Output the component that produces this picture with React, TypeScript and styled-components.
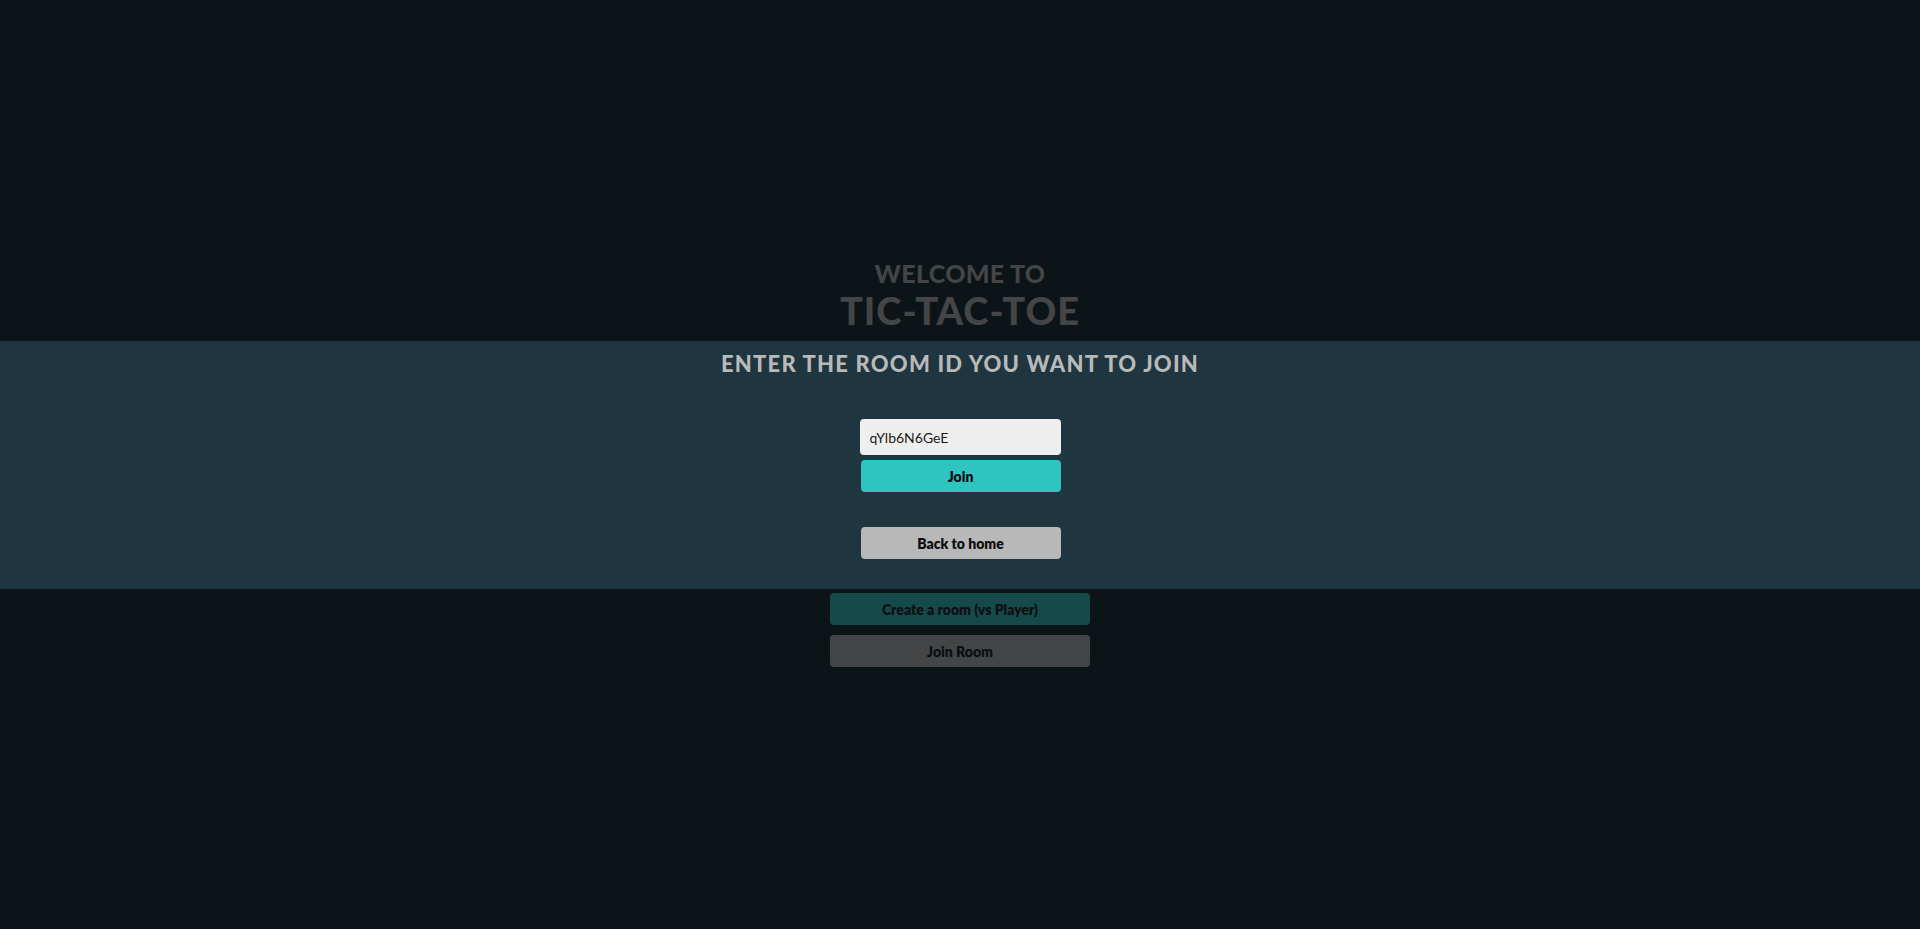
import React from "react";
import styled, { createGlobalStyle } from "styled-components";

const Global = createGlobalStyle`
  html, body { margin: 0; padding: 0; background: #0d1418; }
  body { font-family: "Lato", "Noto Sans", sans-serif; }
  * { box-sizing: border-box; }
`;

const Page = styled.main`
  min-height: 100vh;
  display: flex;
  flex-direction: column;
  align-items: center;
  justify-content: center;
  background: #0d1418;
`;

const Title = styled.h1`
  margin: 0;
  display: flex;
  flex-direction: column;
  align-items: center;
  color: #434546;
  font-weight: 900;
  text-transform: uppercase;
`;

const TitleSmall = styled.span`
  font-size: 25px;
  line-height: 22px;
  letter-spacing: 0.3px;
`;

const TitleBig = styled.span`
  font-size: 38px;
  line-height: 53px;
  letter-spacing: 1px;
`;

const Menu = styled.div`
  margin-top: 256px;
  width: 260px;
  display: flex;
  flex-direction: column;
  gap: 10px;
`;

const MenuButton = styled.button<{ $bg: string }>`
  height: 32px;
  width: 100%;
  border: none;
  border-radius: 4px;
  background: ${(p) => p.$bg};
  color: #0b0f11;
  font-family: inherit;
  font-weight: 800;
  font-size: 14px;
`;

const Overlay = styled.div`
  position: fixed;
  left: 0;
  right: 0;
  top: 341px;
  height: 248px;
  background: #1f3540;
  display: flex;
  flex-direction: column;
  align-items: center;
  padding-top: 8px;
`;

const ModalHeading = styled.h2`
  margin: 0;
  color: #b9b9b9;
  font-size: 22px;
  font-weight: 900;
  letter-spacing: 1.2px;
  text-transform: uppercase;
  line-height: 30px;
`;

const Form = styled.div`
  margin-top: 40px;
  width: 201px;
  display: flex;
  flex-direction: column;
  gap: 5px;
`;

const Input = styled.input`
  height: 36px;
  width: 201px;
  border: none;
  border-radius: 4px;
  background: #eeeeee;
  padding: 0 10px;
  font-family: inherit;
  font-size: 14px;
  color: #1a1a1a;
  outline: none;
`;

const ModalButton = styled.button<{ $bg: string; $gap?: number }>`
  height: 32px;
  width: 200px;
  margin-left: 1px;
  margin-top: ${(p) => p.$gap ?? 0}px;
  border: none;
  border-radius: 4px;
  background: ${(p) => p.$bg};
  color: #0b0f11;
  font-family: inherit;
  font-weight: 800;
  font-size: 14px;
`;

export default function App() {
  return (
    <>
      <Global />
      <Page>
        <Title>
          <TitleSmall>Welcome to</TitleSmall>
          <TitleBig>Tic-Tac-Toe</TitleBig>
        </Title>
        <Menu>
          <MenuButton $bg="#154a4b">Create a room (vs Player)</MenuButton>
          <MenuButton $bg="#444546">Join Room</MenuButton>
        </Menu>
      </Page>
      <Overlay>
        <ModalHeading>Enter the room ID you want to join</ModalHeading>
        <Form>
          <Input defaultValue="qYlb6N6GeE" />
          <ModalButton $bg="#2ec4bf">Join</ModalButton>
          <ModalButton $bg="#b8b8b8" $gap={30}>Back to home</ModalButton>
        </Form>
      </Overlay>
    </>
  );
}
